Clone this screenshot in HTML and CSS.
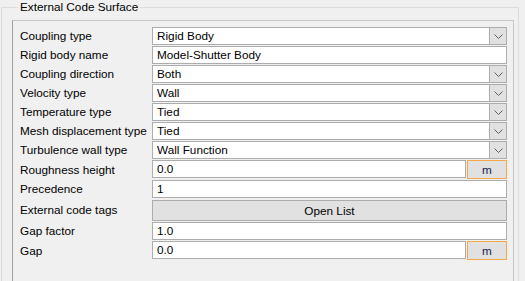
FILE: index.html
```html
<!DOCTYPE html>
<html lang="en">
<head>
  <meta charset="UTF-8" />
  <title>External Code Surface</title>
  <link rel="stylesheet" href="styles.css">
</head>
<body>
  <fieldset class="group">
    <legend>External Code Surface</legend>

    <div class="panel">
      <div class="label">Coupling type</div>
      <div class="combo"><span>Rigid Body</span><span class="arrow"><svg width="9" height="5" viewBox="0 0 9 5"><path d="M0.5 0.5 L4.5 4.5 L8.5 0.5" fill="none" stroke="#606060" stroke-width="1"/></svg></span></div>

      <div class="label">Rigid body name</div>
      <div class="field">Model-Shutter Body</div>

      <div class="label">Coupling direction</div>
      <div class="combo"><span>Both</span><span class="arrow"><svg width="9" height="5" viewBox="0 0 9 5"><path d="M0.5 0.5 L4.5 4.5 L8.5 0.5" fill="none" stroke="#606060" stroke-width="1"/></svg></span></div>

      <div class="label">Velocity type</div>
      <div class="combo"><span>Wall</span><span class="arrow"><svg width="9" height="5" viewBox="0 0 9 5"><path d="M0.5 0.5 L4.5 4.5 L8.5 0.5" fill="none" stroke="#606060" stroke-width="1"/></svg></span></div>

      <div class="label">Temperature type</div>
      <div class="combo"><span>Tied</span><span class="arrow"><svg width="9" height="5" viewBox="0 0 9 5"><path d="M0.5 0.5 L4.5 4.5 L8.5 0.5" fill="none" stroke="#606060" stroke-width="1"/></svg></span></div>

      <div class="label">Mesh displacement type</div>
      <div class="combo"><span>Tied</span><span class="arrow"><svg width="9" height="5" viewBox="0 0 9 5"><path d="M0.5 0.5 L4.5 4.5 L8.5 0.5" fill="none" stroke="#606060" stroke-width="1"/></svg></span></div>

      <div class="label">Turbulence wall type</div>
      <div class="combo"><span>Wall Function</span><span class="arrow"><svg width="9" height="5" viewBox="0 0 9 5"><path d="M0.5 0.5 L4.5 4.5 L8.5 0.5" fill="none" stroke="#606060" stroke-width="1"/></svg></span></div>

      <div class="label">Roughness height</div>
      <div class="with-unit">
        <div class="field">0.0</div>
        <div class="unit">m</div>
      </div>

      <div class="label">Precedence</div>
      <div class="field">1</div>

      <div class="label tall">External code tags</div>
      <div class="button tall">Open List</div>

      <div class="label">Gap factor</div>
      <div class="field">1.0</div>

      <div class="label">Gap</div>
      <div class="with-unit">
        <div class="field">0.0</div>
        <div class="unit">m</div>
      </div>
    </div>
  </fieldset>
</body>
</html>
```

FILE: styles.css
```css
:root {
  --face: #f0f0f0;
  --field-border: #adadad;
  --button-bg: #e1e1e1;
  --focus: #f7a64a;
  --text: #000;
}

* {
  box-sizing: border-box;
  margin: 0;
  padding: 0;
}

body {
  background: var(--face);
  color: var(--text);
  font-family: 'Liberation Sans', Arial, sans-serif;
  font-size: 11.75px;
  height: 281px;
  overflow: hidden;
}

.group {
  margin: 0 6px 0 1px;
  padding: 6px 4px 0 10px;
  border: 1px solid #dcdcdc;
  border-bottom: none;
  height: 281px;
}

.group legend {
  margin-left: 6px;
  padding: 0 2px;
  line-height: 14px;
}

.panel {
  display: grid;
  grid-template-columns: 132px 1fr;
  row-gap: 1px;
  align-items: center;
  align-content: start;
  height: 261px;
  padding: 6px 6px 0 7px;
  border: 1px solid #c8c8c8;
  border-left-color: #a0a0a0;
  border-bottom: none;
}

.label {
  height: 18px;
  line-height: 18px;
  white-space: nowrap;
}

.label.tall,
.button.tall {
  height: 21px;
  line-height: 19px;
  margin: 1px 0 0;
}

.field,
.combo {
  height: 18px;
  line-height: 16px;
  background: #fff;
  border: 1px solid var(--field-border);
  padding: 0 4px;
  white-space: nowrap;
}

.combo {
  display: flex;
  justify-content: space-between;
  padding-right: 0;
}

.combo .arrow {
  width: 17px;
  background: var(--button-bg);
  border-left: 1px solid var(--field-border);
  display: flex;
  align-items: center;
  justify-content: center;
}

.with-unit {
  display: flex;
  gap: 1px;
}

.with-unit .field {
  flex: 1;
}

.unit {
  width: 40px;
  height: 19px;
  line-height: 17px;
  text-align: center;
  background: var(--button-bg);
  border: 1px solid var(--focus);
  color: #1c1c50;
}

.button {
  background: var(--button-bg);
  border: 1px solid var(--field-border);
  text-align: center;
}
```
